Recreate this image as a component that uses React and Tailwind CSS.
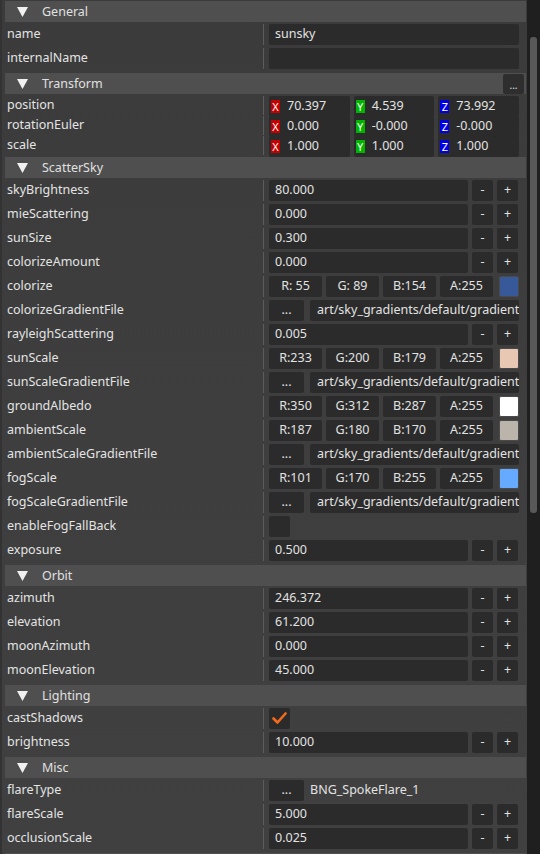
import React from 'react'

const FONT = { fontFamily: '"Noto Sans", "Open Sans", sans-serif' }

const SECTIONS = [
  {
    title: 'General',
    rows: [
      { label: 'name', type: 'text', value: 'sunsky' },
      { label: 'internalName', type: 'text', value: '' },
    ],
  },
  {
    title: 'Transform',
    menu: true,
    rows: [
      { label: 'position', type: 'vec', value: ['70.397', '4.539', '73.992'] },
      { label: 'rotationEuler', type: 'vec', value: ['0.000', '-0.000', '-0.000'] },
      { label: 'scale', type: 'vec', value: ['1.000', '1.000', '1.000'] },
    ],
  },
  {
    title: 'ScatterSky',
    rows: [
      { label: 'skyBrightness', type: 'num', value: '80.000' },
      { label: 'mieScattering', type: 'num', value: '0.000' },
      { label: 'sunSize', type: 'num', value: '0.300' },
      { label: 'colorizeAmount', type: 'num', value: '0.000' },
      { label: 'colorize', type: 'color', value: ['R: 55', 'G: 89', 'B:154', 'A:255'], swatch: 'bg-[#37599a]' },
      { label: 'colorizeGradientFile', type: 'file', value: 'art/sky_gradients/default/gradient_colorize.png' },
      { label: 'rayleighScattering', type: 'num', value: '0.005' },
      { label: 'sunScale', type: 'color', value: ['R:233', 'G:200', 'B:179', 'A:255'], swatch: 'bg-[#e9c8b3]' },
      { label: 'sunScaleGradientFile', type: 'file', value: 'art/sky_gradients/default/gradient_sunscale.png' },
      { label: 'groundAlbedo', type: 'color', value: ['R:350', 'G:312', 'B:287', 'A:255'], swatch: 'bg-[#ffffff]' },
      { label: 'ambientScale', type: 'color', value: ['R:187', 'G:180', 'B:170', 'A:255'], swatch: 'bg-[#bbb4aa]' },
      { label: 'ambientScaleGradientFile', type: 'file', value: 'art/sky_gradients/default/gradient_ambient.png' },
      { label: 'fogScale', type: 'color', value: ['R:101', 'G:170', 'B:255', 'A:255'], swatch: 'bg-[#65aaff]' },
      { label: 'fogScaleGradientFile', type: 'file', value: 'art/sky_gradients/default/gradient_fog.png' },
      { label: 'enableFogFallBack', type: 'check', value: false },
      { label: 'exposure', type: 'num', value: '0.500' },
    ],
  },
  {
    title: 'Orbit',
    rows: [
      { label: 'azimuth', type: 'num', value: '246.372' },
      { label: 'elevation', type: 'num', value: '61.200' },
      { label: 'moonAzimuth', type: 'num', value: '0.000' },
      { label: 'moonElevation', type: 'num', value: '45.000' },
    ],
  },
  {
    title: 'Lighting',
    rows: [
      { label: 'castShadows', type: 'check', value: true },
      { label: 'brightness', type: 'num', value: '10.000' },
    ],
  },
  {
    title: 'Misc',
    rows: [
      { label: 'flareType', type: 'picker', value: 'BNG_SpokeFlare_1' },
      { label: 'flareScale', type: 'num', value: '5.000' },
      { label: 'occlusionScale', type: 'num', value: '0.025' },
    ],
  },
  { title: '', rows: [] },
]

const AXES = [
  { key: 'X', color: 'bg-[#c40000]' },
  { key: 'Y', color: 'bg-[#00b400]' },
  { key: 'Z', color: 'bg-[#0000e6]' },
]

function Box({ className = '', children }) {
  return (
    <div className={`h-[21px] bg-[#2b2b2b] rounded-[2px] flex items-center text-[12.5px] text-[#e2e2e2] ${className}`}>
      {children}
    </div>
  )
}

function Dots({ className = '' }) {
  return (
    <Box className={`justify-center items-end pb-[1px] text-[10px] ${className}`}>...</Box>
  )
}

function Value({ row }) {
  if (row.type === 'text') {
    return <Box className="w-[250px] px-[6px]">{row.value}</Box>
  }
  if (row.type === 'num') {
    return (
      <div className="flex gap-[4px]">
        <Box className="w-[199px] px-[6px]">{row.value}</Box>
        <Box className="w-[21px] justify-center text-[#cfcfcf]">-</Box>
        <Box className="w-[21px] justify-center">+</Box>
      </div>
    )
  }
  if (row.type === 'vec') {
    return (
      <div className="flex gap-[4px] w-[250px]">
        {row.value.map((v, i) => (
          <Box key={i} className="flex-1 h-[19px] pl-[2px] gap-[7px]">
            <span className={`w-[9px] h-[13px] ${AXES[i].color} text-white text-[11px] leading-[13px] flex items-center justify-center`}>
              {AXES[i].key}
            </span>
            <span>{v}</span>
          </Box>
        ))}
      </div>
    )
  }
  if (row.type === 'color') {
    return (
      <div className="flex w-[250px]">
        <div className="flex gap-[4px]">
          {row.value.map((v) => (
            <Box key={v} className="w-[53px] justify-center">{v}</Box>
          ))}
        </div>
        <div className={`ml-[6px] w-[20px] h-[21px] rounded-[2px] border border-[#4a4a4a] ${row.swatch}`} />
      </div>
    )
  }
  if (row.type === 'file') {
    return (
      <div className="flex gap-[6px] w-[250px]">
        <Dots className="w-[35px]" />
        <Box className="w-[209px] pl-[7px] overflow-hidden whitespace-nowrap">{row.value}</Box>
      </div>
    )
  }
  if (row.type === 'picker') {
    return (
      <div className="flex gap-[6px] items-center w-[250px]">
        <Dots className="w-[35px]" />
        <span className="text-[12.5px] text-[#e2e2e2]">{row.value}</span>
      </div>
    )
  }
  if (row.type === 'check') {
    return (
      <Box className="w-[21px] justify-center">
        {row.value && (
          <svg width="15" height="13" viewBox="0 0 15 13">
            <path d="M1.5 6.5 L5.5 10.5 L13.5 1.5" fill="none" stroke="#f26b1d" strokeWidth="2.6" strokeLinecap="round" strokeLinejoin="round" />
          </svg>
        )}
      </Box>
    )
  }
  return null
}

function Row({ row }) {
  const vec = row.type === 'vec'
  return (
    <div className={`flex ${vec ? 'h-[20px]' : 'h-[24px]'}`}>
      <div
        className={`w-[262px] shrink-0 pl-[5px] border-r border-[#5c5c5c] flex items-center text-[12.5px] text-[#e4e4e4] mt-[1px] ${vec ? 'h-[19px]' : 'h-[21px]'}`}
      >
        {row.label}
      </div>
      <div className="ml-[5px] mt-[1px]">
        <Value row={row} />
      </div>
    </div>
  )
}

function Section({ section }) {
  return (
    <div className="pb-[2px]">
      <div className="ml-[3px] mr-[1px] h-[21px] bg-[#4f4f4f] flex items-center">
        <svg width="11" height="10" viewBox="0 0 11 10" className="ml-[12px] mt-[1px]">
          <polygon points="0,0 11,0 5.5,10" fill="#f2f2f2" />
        </svg>
        <span className="ml-[14px] mt-[2px] text-[12.5px] text-[#e0e0e0]">{section.title}</span>
        {section.menu && (
          <div className="ml-auto mr-[2px] w-[21px] h-[20px] bg-[#2e2e2e] rounded-[2px] flex items-end justify-center pb-[1px] text-[10px] text-[#e2e2e2]">
            ...
          </div>
        )}
      </div>
      <div className="pt-[1px]">
        {section.rows.map((r) => (
          <Row key={r.label} row={r} />
        ))}
      </div>
    </div>
  )
}

export default function App() {
  return (
    <div className="w-[540px] h-[854px] overflow-hidden flex bg-[#3c3c3c]" style={FONT}>
      <div className="w-[527px] h-full overflow-hidden pt-[1px] border-l-2 border-[#333333] bg-gradient-to-b from-[#3b3b3b] via-[#3e3e3e] to-[#404040]">
        {SECTIONS.map((s, i) => (
          <Section key={i} section={s} />
        ))}
      </div>
      <div className="w-[13px] h-full bg-[#1f1f1f] pt-[37px] pl-[3px]">
        <div className="w-[7px] h-[476px] rounded-[3px] bg-[#585858]" />
      </div>
    </div>
  )
}
